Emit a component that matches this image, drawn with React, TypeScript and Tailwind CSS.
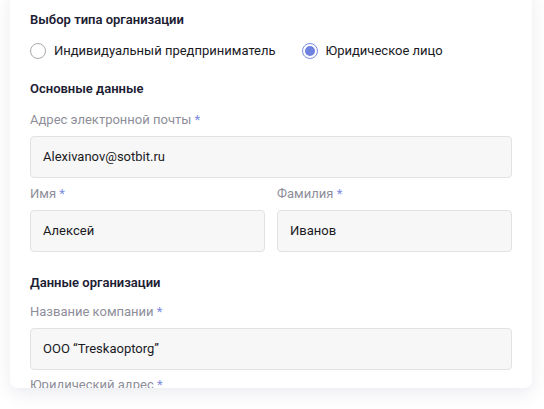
import React, { useState } from 'react';

const font = { fontFamily: 'Roboto, "Noto Sans", sans-serif' };

const Label: React.FC<{ text: string }> = ({ text }) => (
  <div className="text-[13px] leading-5 text-[#8e8e9a] mb-1.5">
    {text} <span className="text-[#7b8ce0]">*</span>
  </div>
);

const Field: React.FC<{ label: string; value: string }> = ({ label, value }) => (
  <div>
    <Label text={label} />
    <div className="h-[42px] rounded-[4px] border border-[#e2e2e4] bg-[#f7f7f7] px-3 flex items-center text-[13px] text-[#1a1a1f]">
      {value}
    </div>
  </div>
);

const Radio: React.FC<{ checked: boolean; label: string; onClick: () => void }> = ({ checked, label, onClick }) => (
  <button onClick={onClick} className="flex items-center gap-2 text-[13px] text-[#1a1a1f]">
    {checked ? (
      <span className="w-4 h-4 rounded-full border border-[#7b8ce0] flex items-center justify-center">
        <span className="w-[10px] h-[10px] rounded-full bg-[#6f82df]"></span>
      </span>
    ) : (
      <span className="w-4 h-4 rounded-full border border-[#a9a9b0] bg-white"></span>
    )}
    {label}
  </button>
);

export default function App() {
  const [type, setType] = useState<'ip' | 'ul'>('ul');

  return (
    <div className="w-[544px] h-[409px] bg-white overflow-hidden" style={font}>
      <div className="ml-[10px] w-[522px] h-[400px] -mt-3 rounded-lg bg-white overflow-hidden shadow-[0_6px_18px_rgba(60,70,110,0.10)] px-5 pt-[22px]">
        <h2 className="text-[13px] leading-5 font-semibold text-[#1c2033]">Выбор типа организации</h2>
        <div className="mt-[11px] flex items-center gap-[26px]">
          <Radio checked={type === 'ip'} label="Индивидуальный предприниматель" onClick={() => setType('ip')} />
          <Radio checked={type === 'ul'} label="Юридическое лицо" onClick={() => setType('ul')} />
        </div>

        <h2 className="mt-[18px] text-[13px] leading-5 font-semibold text-[#1c2033]">Основные данные</h2>
        <div className="mt-[11px]">
          <Field label="Адрес электронной почты" value="Alexivanov@sotbit.ru" />
        </div>
        <div className="mt-1.5 grid grid-cols-2 gap-3">
          <Field label="Имя" value="Алексей" />
          <Field label="Фамилия" value="Иванов" />
        </div>

        <h2 className="mt-[21px] text-[13px] leading-5 font-semibold text-[#1c2033]">Данные организации</h2>
        <div className="mt-[9px]">
          <Field label="Название компании" value="ООО “Treskaoptorg”" />
        </div>
        <div className="mt-[5px]">
          <Label text="Юридический адрес" />
        </div>
      </div>
    </div>
  );
}
